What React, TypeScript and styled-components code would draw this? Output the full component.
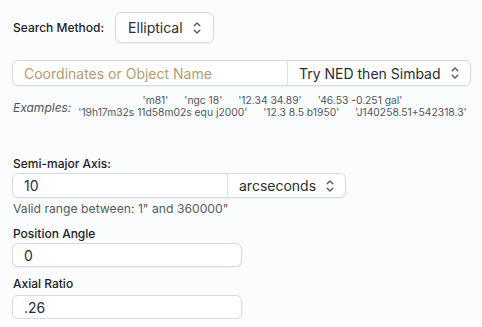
import React from "react";
import styled, { createGlobalStyle } from "styled-components";

const Global = createGlobalStyle`
  html, body { margin: 0; padding: 0; background: #fbfcfe; }
  body { font-family: Inter, "Noto Sans", sans-serif; color: #1f2328; }
  * { box-sizing: border-box; }
`;

const Page = styled.div`
  display: flex;
  flex-direction: column;
  padding: 12px 12px 0 12px;
  width: 482px;
`;

const MethodRow = styled.div`
  display: flex;
  align-items: center;
  gap: 11px;
  height: 31px;
`;

const Label = styled.div`
  font-size: 12px;
  font-weight: 500;
  color: #1d2024;
  line-height: 16px;
  padding-left: 1px;
`;

const FieldLabel = styled(Label)<{ $top: number }>`
  padding-top: 2px;
  margin-top: ${(p) => p.$top}px;
`;

const Select = styled.div`
  display: flex;
  align-items: center;
  justify-content: space-between;
  height: 31px;
  width: 99px;
  padding: 0 11px 0 12px;
  background: #fff;
  border: 1px solid #d6dae2;
  border-radius: 6px;
  box-shadow: 0 1px 2px rgba(20, 30, 50, 0.06);
  font-size: 14px;
  color: #2a2d31;
`;

const Group = styled.div<{ $width: number; $height: number; $top: number }>`
  display: flex;
  width: ${(p) => p.$width}px;
  height: ${(p) => p.$height}px;
  margin-top: ${(p) => p.$top}px;
  background: #fff;
  border: 1px solid #d6dae2;
  border-radius: 6px;
  box-shadow: 0 1px 2px rgba(20, 30, 50, 0.06);
  overflow: hidden;
`;

const Field = styled.div<{ $placeholder?: boolean }>`
  flex: 1;
  display: flex;
  align-items: center;
  padding: 0 11px;
  font-size: 14px;
  white-space: nowrap;
  color: ${(p) => (p.$placeholder ? "#b39c70" : "#2a2d31")};
`;

const Addon = styled.div<{ $width: number }>`
  width: ${(p) => p.$width}px;
  flex-shrink: 0;
  display: flex;
  align-items: center;
  justify-content: space-between;
  padding: 0 10px 0 11px;
  border-left: 1px solid #dde1e7;
  font-size: 14px;
  white-space: nowrap;
  color: #2a2d31;
`;

const Examples = styled.div`
  display: flex;
  align-items: center;
  margin-top: 7px;
  height: 26px;
`;

const ExLabel = styled.div`
  font-style: italic;
  font-size: 12px;
  color: #50555c;
  width: 63px;
  flex-shrink: 0;
  padding-left: 1px;
  padding-top: 2px;
`;

const ExList = styled.div`
  display: flex;
  flex-wrap: wrap;
  justify-content: center;
  column-gap: 16px;
  row-gap: 0;
  width: 395px;
  font-size: 10.3px;
  line-height: 12px;
  color: #50555c;
  white-space: nowrap;
`;

const Hint = styled.div`
  font-size: 12.2px;
  line-height: 15px;
  color: #555a62;
  margin-top: 3px;
  padding-left: 1px;
`;

const Chevrons = () => (
  <svg width="10" height="14" viewBox="0 0 10 14" fill="none" stroke="#555a62" strokeWidth="1.4" strokeLinecap="round" strokeLinejoin="round">
    <path d="M2.2 4.8 L5 2 L7.8 4.8" />
    <path d="M2.2 9.2 L5 12 L7.8 9.2" />
  </svg>
);

const examples = [
  "'m81'",
  "'ngc 18'",
  "'12.34 34.89'",
  "'46.53 -0.251 gal'",
  "'19h17m32s 11d58m02s equ j2000'",
  "'12.3 8.5 b1950'",
  "'J140258.51+542318.3'",
];

export default function App() {
  return (
    <>
      <Global />
      <Page>
        <MethodRow>
          <Label>Search Method:</Label>
          <Select>
            <span>Elliptical</span>
            <Chevrons />
          </Select>
        </MethodRow>

        <Group $width={459} $height={26} $top={17}>
          <Field $placeholder>Coordinates or Object Name</Field>
          <Addon $width={183}>
            <span>Try NED then Simbad</span>
            <Chevrons />
          </Addon>
        </Group>

        <Examples>
          <ExLabel>Examples:</ExLabel>
          <ExList>
            {examples.map((e) => (
              <span key={e}>{e}</span>
            ))}
          </ExList>
        </Examples>

        <FieldLabel $top={35}>Semi-major Axis:</FieldLabel>
        <Group $width={334} $height={25} $top={1}>
          <Field>10</Field>
          <Addon $width={118}>
            <span>arcseconds</span>
            <Chevrons />
          </Addon>
        </Group>
        <Hint>Valid range between: 1" and 360000"</Hint>

        <FieldLabel $top={8}>Position Angle</FieldLabel>
        <Group $width={230} $height={24} $top={1}>
          <Field>0</Field>
        </Group>

        <FieldLabel $top={7}>Axial Ratio</FieldLabel>
        <Group $width={230} $height={24} $top={3}>
          <Field>.26</Field>
        </Group>
      </Page>
    </>
  );
}
